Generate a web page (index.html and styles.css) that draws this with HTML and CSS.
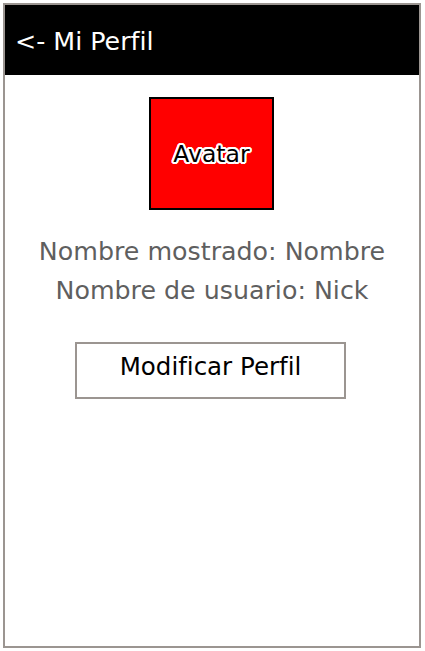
FILE: index.html
```html
<!DOCTYPE html>
<html lang="es">
<head>
<meta charset="utf-8">
<title>Mi Perfil</title>
<link rel="stylesheet" href="styles.css">
</head>
<body>
<div class="frame">
  <header class="topbar"><span class="title">&lt;- Mi Perfil</span></header>
  <main class="content">
    <div class="avatar"><span class="avatar-label">Avatar</span></div>
    <div class="info">
      <p class="line">Nombre mostrado: Nombre</p>
      <p class="line">Nombre de usuario: Nick</p>
    </div>
    <div class="button">Modificar Perfil</div>
  </main>
</div>
</body>
</html>
```
FILE: styles.css
```css
html, body {
  margin: 0;
  padding: 0;
  background: #ffffff;
}
body {
  padding: 3px 4px 4px 3px;
  font-family: "DejaVu Sans", Verdana, sans-serif;
}
.frame {
  width: 414px;
  height: 641px;
  border: 2px solid #9b9591;
  display: flex;
  flex-direction: column;
  background: #ffffff;
}
.topbar {
  height: 70px;
  background: #000000;
  color: #ffffff;
  display: flex;
  align-items: center;
  padding-left: 10px;
  font-size: 25.3px;
  flex-shrink: 0;
}
.title {
  position: relative;
  top: 1px;
}
.content {
  display: flex;
  flex-direction: column;
  align-items: center;
  padding-top: 22px;
}
.avatar {
  width: 121px;
  height: 109px;
  border: 2px solid #000000;
  background: #ff0000;
  display: flex;
  align-items: center;
  justify-content: center;
  margin-left: -1px;
}
.avatar-label {
  font-size: 23.5px;
  color: #000000;
  text-shadow:
    -1px -1px 0 #fff, 1px -1px 0 #fff, -1px 1px 0 #fff, 1px 1px 0 #fff,
    0 -2px 0 #fff, 0 2px 0 #fff, -2px 0 0 #fff, 2px 0 0 #fff,
    -2px -1px 0 #fff, 2px -1px 0 #fff, -2px 1px 0 #fff, 2px 1px 0 #fff,
    -1px -2px 0 #fff, 1px -2px 0 #fff, -1px 2px 0 #fff, 1px 2px 0 #fff;
}
.info {
  margin-top: 22px;
  text-align: center;
  color: #5f5f5f;
  font-size: 25.3px;
}
.line {
  margin: 0;
  line-height: 40px;
}
.line + .line {
  margin-top: -1px;
}
.button {
  margin-top: 31px;
  box-sizing: border-box;
  width: 271px;
  height: 57px;
  border: 2px solid #9b9591;
  text-align: center;
  font-size: 24.5px;
  line-height: 30px;
  padding-top: 8px;
  color: #000000;
  margin-left: -3px;
}
```
